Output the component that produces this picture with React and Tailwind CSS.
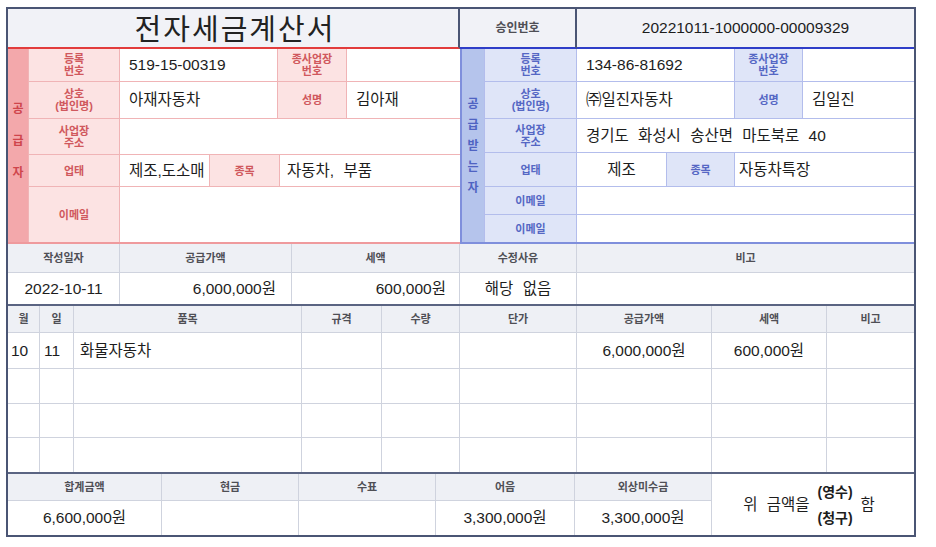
import React from "react";

const RED = {
  lbl: "bg-[#fce3e3] text-[#d0585d] border-[#f0b4b6]",
  val: "bg-white border-[#f0b4b6]",
};
const BLUE = {
  lbl: "bg-[#dfe5f8] text-[#5567c4] border-[#b3bdec]",
  val: "bg-white border-[#b3bdec]",
};

const Lbl = ({ tone, w, children, last }) => (
  <div
    className={`${tone.lbl} ${w} ${last ? "" : "border-r"} flex shrink-0 items-center justify-center text-center text-[11px] font-semibold leading-[12px]`}
  >
    {children}
  </div>
);

const Val = ({ tone, w, children, center, pad = "pl-[9px]" }) => (
  <div
    className={`${tone.val} ${w} ${w === "flex-1" ? "" : "border-r shrink-0"} flex items-center ${center ? "justify-center" : pad} text-[15.5px] text-[#1d1d1d] [word-spacing:5px]`}
  >
    {children}
  </div>
);

const Head = ({ children, last }) => (
  <div
    className={`flex items-center justify-center bg-[#eef0f5] border-b border-[#cfd3de] ${last ? "" : "border-r"} text-[11px] font-semibold text-[#4f4f55]`}
  >
    {children}
  </div>
);

const Cell = ({ children, last, noBottom, className = "" }) => (
  <div
    className={`flex items-center border-[#cfd3de] ${noBottom ? "" : "border-b"} ${last ? "" : "border-r"} bg-white text-[15.5px] text-[#1d1d1d] [word-spacing:5px] ${className}`}
  >
    {children}
  </div>
);

const Supplier = () => (
  <div className="flex w-[452px] border-b-2 border-[#ef9a9d]">
    <div className="flex w-[21px] shrink-0 flex-col items-center justify-center gap-[20px] border-r border-[#f0b4b6] bg-[#f3a8ab] pb-[10px] text-[12px] font-bold leading-[12px] text-[#cf454c]">
      <span>공</span>
      <span>급</span>
      <span>자</span>
    </div>
    <div className="flex flex-1 flex-col">
      <div className="flex h-[33px] border-b border-[#f0b4b6]">
        <Lbl tone={RED} w="w-[91px]">
          등록
          <br />
          번호
        </Lbl>
        <Val tone={RED} w="w-[158px]">519-15-00319</Val>
        <Lbl tone={RED} w="w-[69px]">
          종사업장
          <br />
          번호
        </Lbl>
        <Val tone={RED} w="flex-1" />
      </div>
      <div className="flex h-[37px] border-b border-[#f0b4b6]">
        <Lbl tone={RED} w="w-[91px]">
          상호
          <br />
          (법인명)
        </Lbl>
        <Val tone={RED} w="w-[158px]">아재자동차</Val>
        <Lbl tone={RED} w="w-[69px]">성명</Lbl>
        <Val tone={RED} w="flex-1">김아재</Val>
      </div>
      <div className="flex h-[36px] border-b border-[#f0b4b6]">
        <Lbl tone={RED} w="w-[91px]">
          사업장
          <br />
          주소
        </Lbl>
        <Val tone={RED} w="flex-1" />
      </div>
      <div className="flex h-[32px] border-b border-[#f0b4b6]">
        <Lbl tone={RED} w="w-[91px]">업태</Lbl>
        <Val tone={RED} w="w-[90px]">제조,도소매</Val>
        <Lbl tone={RED} w="w-[70px]">종목</Lbl>
        <Val tone={RED} w="flex-1" pad="pl-[7px]">
          자동차, 부품
        </Val>
      </div>
      <div className="flex flex-1">
        <Lbl tone={RED} w="w-[91px]">이메일</Lbl>
        <Val tone={RED} w="flex-1" />
      </div>
    </div>
  </div>
);

const Receiver = () => (
  <div className="flex flex-1 border-b-2 border-l-2 border-[#7f8fdc]">
    <div className="flex w-[23px] shrink-0 flex-col items-center justify-center gap-[9px] border-r border-[#b3bdec] bg-[#b5c4ec] text-[12px] font-bold leading-[12px] text-[#4f63c2]">
      <span>공</span>
      <span>급</span>
      <span>받</span>
      <span>는</span>
      <span>자</span>
    </div>
    <div className="flex flex-1 flex-col">
      <div className="flex h-[33px] border-b border-[#b3bdec]">
        <Lbl tone={BLUE} w="w-[92px]">
          등록
          <br />
          번호
        </Lbl>
        <Val tone={BLUE} w="w-[158px]">134-86-81692</Val>
        <Lbl tone={BLUE} w="w-[68px]">
          종사업장
          <br />
          번호
        </Lbl>
        <Val tone={BLUE} w="flex-1" />
      </div>
      <div className="flex h-[37px] border-b border-[#b3bdec]">
        <Lbl tone={BLUE} w="w-[92px]">
          상호
          <br />
          (법인명)
        </Lbl>
        <Val tone={BLUE} w="w-[158px]">㈜일진자동차</Val>
        <Lbl tone={BLUE} w="w-[68px]">성명</Lbl>
        <Val tone={BLUE} w="flex-1">김일진</Val>
      </div>
      <div className="flex h-[34px] border-b border-[#b3bdec]">
        <Lbl tone={BLUE} w="w-[92px]">
          사업장
          <br />
          주소
        </Lbl>
        <Val tone={BLUE} w="flex-1">경기도 화성시 송산면 마도북로 40</Val>
      </div>
      <div className="flex h-[34px] border-b border-[#b3bdec]">
        <Lbl tone={BLUE} w="w-[92px]">업태</Lbl>
        <Val tone={BLUE} w="w-[90px]" center>
          제조
        </Val>
        <Lbl tone={BLUE} w="w-[68px]">종목</Lbl>
        <Val tone={BLUE} w="flex-1" pad="pl-[4px]">
          자동차특장
        </Val>
      </div>
      <div className="flex h-[28px] border-b border-[#b3bdec]">
        <Lbl tone={BLUE} w="w-[92px]">이메일</Lbl>
        <Val tone={BLUE} w="flex-1" />
      </div>
      <div className="flex flex-1">
        <Lbl tone={BLUE} w="w-[92px]">이메일</Lbl>
        <Val tone={BLUE} w="flex-1" />
      </div>
    </div>
  </div>
);

const items = [
  { m: "10", d: "11", name: "화물자동차", supply: "6,000,000원", tax: "600,000원" },
  {},
  {},
  {},
];

export default function App() {
  return (
    <div className="min-h-[547px] w-[936px] bg-white pl-[6px] pt-[7px] font-['Liberation_Sans','Noto_Sans_CJK_KR',sans-serif]">
      <div className="w-[910px] border-2 border-[#4a5574]">
        {/* title row */}
        <div className="flex h-[40px] bg-[#f1f2f7]">
          <div className="flex w-[452px] items-center justify-center border-b-2 border-r-2 border-b-[#e23c3c] border-r-[#4a5574] pl-[4px] font-['Noto_Sans_CJK_KR',sans-serif] text-[29px] font-normal tracking-[2px] text-[#222]">
            전자세금계산서
          </div>
          <div className="flex w-[117px] items-center justify-center border-b-2 border-r-2 border-b-[#2f3ec8] border-r-[#4a5574] text-[12px] font-semibold text-[#4f4f55]">
            승인번호
          </div>
          <div className="flex flex-1 items-center justify-center border-b-2 border-[#2f3ec8] text-[15.5px] text-[#1d1d1d]">
            20221011-1000000-00009329
          </div>
        </div>

        {/* parties */}
        <div className="flex h-[195px]">
          <Supplier />
          <Receiver />
        </div>

        {/* summary */}
        <div className="grid grid-cols-[112px_172px_168px_117px_1fr] grid-rows-[29px_31px] border-b-2 border-[#5a6482]">
          <Head>작성일자</Head>
          <Head>공급가액</Head>
          <Head>세액</Head>
          <Head>수정사유</Head>
          <Head last>비고</Head>
          <Cell noBottom className="justify-center">2022-10-11</Cell>
          <Cell noBottom className="justify-end pr-[15px]">6,000,000원</Cell>
          <Cell noBottom className="justify-end pr-[13px]">600,000원</Cell>
          <Cell noBottom className="justify-center">해당 없음</Cell>
          <Cell noBottom last />
        </div>

        {/* items */}
        <div className="grid grid-cols-[32px_34px_228px_80px_78px_117px_135px_115px_1fr] grid-rows-[27px_36px_35px_34px_34px] border-b-2 border-[#5a6482]">
          <Head>월</Head>
          <Head>일</Head>
          <Head>품목</Head>
          <Head>규격</Head>
          <Head>수량</Head>
          <Head>단가</Head>
          <Head>공급가액</Head>
          <Head>세액</Head>
          <Head last>비고</Head>
          {items.map((it, i) => {
            const nb = i === items.length - 1;
            return (
              <React.Fragment key={i}>
                <Cell noBottom={nb} className="pl-[3px]">{it.m}</Cell>
                <Cell noBottom={nb} className="pl-[4px]">{it.d}</Cell>
                <Cell noBottom={nb} className="pl-[6px]">{it.name}</Cell>
                <Cell noBottom={nb} />
                <Cell noBottom={nb} />
                <Cell noBottom={nb} />
                <Cell noBottom={nb} className="justify-center">{it.supply}</Cell>
                <Cell noBottom={nb} className="justify-center">{it.tax}</Cell>
                <Cell noBottom={nb} last />
              </React.Fragment>
            );
          })}
        </div>

        {/* totals */}
        <div className="grid grid-cols-[154px_137px_137px_139px_137px_1fr] grid-rows-[27px_34px]">
          <Head>합계금액</Head>
          <Head>현금</Head>
          <Head>수표</Head>
          <Head>어음</Head>
          <Head>외상미수금</Head>
          <div className="row-span-2 flex items-center justify-center gap-[8px] bg-white pr-[8px] text-[15.5px] text-[#1d1d1d]">
            <span className="[word-spacing:5px]">위 금액을</span>
            <span className="flex flex-col text-[14px] font-bold leading-[26px]">
              <span>(영수)</span>
              <span>(청구)</span>
            </span>
            <span>함</span>
          </div>
          <Cell noBottom className="justify-center">6,600,000원</Cell>
          <Cell noBottom />
          <Cell noBottom />
          <Cell noBottom className="justify-center">3,300,000원</Cell>
          <Cell noBottom className="justify-center">3,300,000원</Cell>
        </div>
      </div>
    </div>
  );
}
